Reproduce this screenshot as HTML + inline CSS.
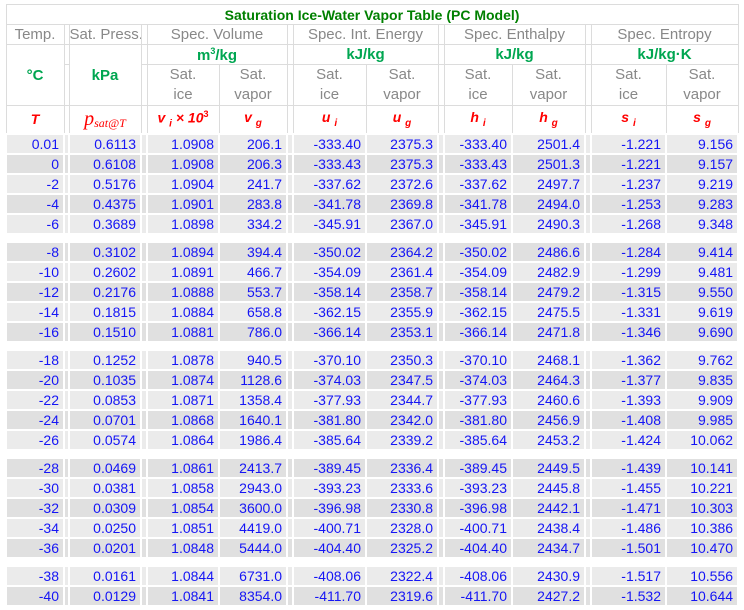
<!DOCTYPE html>
<html><head><meta charset="utf-8"><style>
body{margin:0;background:#fff;width:744px;height:610px;overflow:hidden;font-family:"Liberation Sans",Arial,sans-serif}
table{position:absolute;left:5px;top:4px;border-collapse:collapse;table-layout:fixed;width:734px}
td{padding:0;font-size:14px;overflow:hidden;white-space:nowrap}
.h td{border:1px solid #dcdcdc;text-align:center;background:#fff}
.t td{color:#008000;font-weight:bold;font-size:14px;height:19px}
.g td,td.g{color:#888;font-size:15px}
.u{color:#00a651;font-weight:bold;font-size:15px}
.s{color:#f00;font-weight:bold;font-style:italic}
.d td{height:18px;border:2px solid #fff;text-align:right;padding-right:4px;color:#1515f5;background:#ebebeb}
.d.b td{background:#e0e0e0}
.d td.x{padding:0}
.sep td{height:6px;background:#fff;border:1px solid #fff;border-top:0}
sub{font-size:10px;font-style:italic;vertical-align:-4px}
</style></head><body>
<table>
<colgroup><col style="width:58px"><col style="width:5px"><col style="width:72px"><col style="width:6px"><col style="width:72px"><col style="width:68px"><col style="width:6px"><col style="width:73px"><col style="width:72px"><col style="width:6px"><col style="width:68px"><col style="width:73px"><col style="width:6px"><col style="width:75px"><col style="width:72px"></colgroup>
<tr class="h t"><td colspan="15">Saturation Ice-Water Vapor Table (PC Model)</td></tr>
<tr class="h g" style="height:20px"><td>Temp.</td><td></td><td>Sat. Press.</td><td></td><td colspan="2">Spec. Volume</td><td></td><td colspan="2">Spec. Int. Energy</td><td></td><td colspan="2">Spec. Enthalpy</td><td></td><td colspan="2">Spec. Entropy</td></tr>
<tr class="h" style="height:20px"><td rowspan="2" class="u">°C</td><td></td><td rowspan="2" class="u">kPa</td><td></td><td colspan="2" class="u">m<sup style="font-size:9px">3</sup>/kg</td><td></td><td colspan="2" class="u">kJ/kg</td><td></td><td colspan="2" class="u">kJ/kg</td><td></td><td colspan="2" class="u">kJ/kg·K</td></tr>
<tr class="h g" style="height:40px;line-height:20px"><td></td><td></td><td>Sat.<br>ice</td><td>Sat.<br>vapor</td><td></td><td>Sat.<br>ice</td><td>Sat.<br>vapor</td><td></td><td>Sat.<br>ice</td><td>Sat.<br>vapor</td><td></td><td>Sat.<br>ice</td><td>Sat.<br>vapor</td></tr>
<tr class="h s" style="height:28px"><td>T</td><td></td><td style="font-family:'Liberation Serif',serif;font-weight:normal;font-size:20px">p<sub style="font-size:12px;vertical-align:-2px">sat@T</sub></td><td></td><td>v <sub>i</sub> × 10<sup style="font-size:9px;font-style:normal">3</sup></td><td>v <sub>g</sub></td><td></td><td>u <sub>i</sub></td><td>u <sub>g</sub></td><td></td><td>h <sub>i</sub></td><td>h <sub>g</sub></td><td></td><td>s <sub>i</sub></td><td>s <sub>g</sub></td></tr>
<tr class="d"><td>0.01</td><td class="x"></td><td>0.6113</td><td class="x"></td><td>1.0908</td><td>206.1</td><td class="x"></td><td>-333.40</td><td>2375.3</td><td class="x"></td><td>-333.40</td><td>2501.4</td><td class="x"></td><td>-1.221</td><td>9.156</td></tr>
<tr class="d b"><td>0</td><td class="x"></td><td>0.6108</td><td class="x"></td><td>1.0908</td><td>206.3</td><td class="x"></td><td>-333.43</td><td>2375.3</td><td class="x"></td><td>-333.43</td><td>2501.3</td><td class="x"></td><td>-1.221</td><td>9.157</td></tr>
<tr class="d"><td>-2</td><td class="x"></td><td>0.5176</td><td class="x"></td><td>1.0904</td><td>241.7</td><td class="x"></td><td>-337.62</td><td>2372.6</td><td class="x"></td><td>-337.62</td><td>2497.7</td><td class="x"></td><td>-1.237</td><td>9.219</td></tr>
<tr class="d b"><td>-4</td><td class="x"></td><td>0.4375</td><td class="x"></td><td>1.0901</td><td>283.8</td><td class="x"></td><td>-341.78</td><td>2369.8</td><td class="x"></td><td>-341.78</td><td>2494.0</td><td class="x"></td><td>-1.253</td><td>9.283</td></tr>
<tr class="d"><td>-6</td><td class="x"></td><td>0.3689</td><td class="x"></td><td>1.0898</td><td>334.2</td><td class="x"></td><td>-345.91</td><td>2367.0</td><td class="x"></td><td>-345.91</td><td>2490.3</td><td class="x"></td><td>-1.268</td><td>9.348</td></tr>
<tr class="sep"><td colspan="15"></td></tr>
<tr class="d b"><td>-8</td><td class="x"></td><td>0.3102</td><td class="x"></td><td>1.0894</td><td>394.4</td><td class="x"></td><td>-350.02</td><td>2364.2</td><td class="x"></td><td>-350.02</td><td>2486.6</td><td class="x"></td><td>-1.284</td><td>9.414</td></tr>
<tr class="d"><td>-10</td><td class="x"></td><td>0.2602</td><td class="x"></td><td>1.0891</td><td>466.7</td><td class="x"></td><td>-354.09</td><td>2361.4</td><td class="x"></td><td>-354.09</td><td>2482.9</td><td class="x"></td><td>-1.299</td><td>9.481</td></tr>
<tr class="d b"><td>-12</td><td class="x"></td><td>0.2176</td><td class="x"></td><td>1.0888</td><td>553.7</td><td class="x"></td><td>-358.14</td><td>2358.7</td><td class="x"></td><td>-358.14</td><td>2479.2</td><td class="x"></td><td>-1.315</td><td>9.550</td></tr>
<tr class="d"><td>-14</td><td class="x"></td><td>0.1815</td><td class="x"></td><td>1.0884</td><td>658.8</td><td class="x"></td><td>-362.15</td><td>2355.9</td><td class="x"></td><td>-362.15</td><td>2475.5</td><td class="x"></td><td>-1.331</td><td>9.619</td></tr>
<tr class="d b"><td>-16</td><td class="x"></td><td>0.1510</td><td class="x"></td><td>1.0881</td><td>786.0</td><td class="x"></td><td>-366.14</td><td>2353.1</td><td class="x"></td><td>-366.14</td><td>2471.8</td><td class="x"></td><td>-1.346</td><td>9.690</td></tr>
<tr class="sep"><td colspan="15"></td></tr>
<tr class="d"><td>-18</td><td class="x"></td><td>0.1252</td><td class="x"></td><td>1.0878</td><td>940.5</td><td class="x"></td><td>-370.10</td><td>2350.3</td><td class="x"></td><td>-370.10</td><td>2468.1</td><td class="x"></td><td>-1.362</td><td>9.762</td></tr>
<tr class="d b"><td>-20</td><td class="x"></td><td>0.1035</td><td class="x"></td><td>1.0874</td><td>1128.6</td><td class="x"></td><td>-374.03</td><td>2347.5</td><td class="x"></td><td>-374.03</td><td>2464.3</td><td class="x"></td><td>-1.377</td><td>9.835</td></tr>
<tr class="d"><td>-22</td><td class="x"></td><td>0.0853</td><td class="x"></td><td>1.0871</td><td>1358.4</td><td class="x"></td><td>-377.93</td><td>2344.7</td><td class="x"></td><td>-377.93</td><td>2460.6</td><td class="x"></td><td>-1.393</td><td>9.909</td></tr>
<tr class="d b"><td>-24</td><td class="x"></td><td>0.0701</td><td class="x"></td><td>1.0868</td><td>1640.1</td><td class="x"></td><td>-381.80</td><td>2342.0</td><td class="x"></td><td>-381.80</td><td>2456.9</td><td class="x"></td><td>-1.408</td><td>9.985</td></tr>
<tr class="d"><td>-26</td><td class="x"></td><td>0.0574</td><td class="x"></td><td>1.0864</td><td>1986.4</td><td class="x"></td><td>-385.64</td><td>2339.2</td><td class="x"></td><td>-385.64</td><td>2453.2</td><td class="x"></td><td>-1.424</td><td>10.062</td></tr>
<tr class="sep"><td colspan="15"></td></tr>
<tr class="d b"><td>-28</td><td class="x"></td><td>0.0469</td><td class="x"></td><td>1.0861</td><td>2413.7</td><td class="x"></td><td>-389.45</td><td>2336.4</td><td class="x"></td><td>-389.45</td><td>2449.5</td><td class="x"></td><td>-1.439</td><td>10.141</td></tr>
<tr class="d"><td>-30</td><td class="x"></td><td>0.0381</td><td class="x"></td><td>1.0858</td><td>2943.0</td><td class="x"></td><td>-393.23</td><td>2333.6</td><td class="x"></td><td>-393.23</td><td>2445.8</td><td class="x"></td><td>-1.455</td><td>10.221</td></tr>
<tr class="d b"><td>-32</td><td class="x"></td><td>0.0309</td><td class="x"></td><td>1.0854</td><td>3600.0</td><td class="x"></td><td>-396.98</td><td>2330.8</td><td class="x"></td><td>-396.98</td><td>2442.1</td><td class="x"></td><td>-1.471</td><td>10.303</td></tr>
<tr class="d"><td>-34</td><td class="x"></td><td>0.0250</td><td class="x"></td><td>1.0851</td><td>4419.0</td><td class="x"></td><td>-400.71</td><td>2328.0</td><td class="x"></td><td>-400.71</td><td>2438.4</td><td class="x"></td><td>-1.486</td><td>10.386</td></tr>
<tr class="d b"><td>-36</td><td class="x"></td><td>0.0201</td><td class="x"></td><td>1.0848</td><td>5444.0</td><td class="x"></td><td>-404.40</td><td>2325.2</td><td class="x"></td><td>-404.40</td><td>2434.7</td><td class="x"></td><td>-1.501</td><td>10.470</td></tr>
<tr class="sep"><td colspan="15"></td></tr>
<tr class="d"><td>-38</td><td class="x"></td><td>0.0161</td><td class="x"></td><td>1.0844</td><td>6731.0</td><td class="x"></td><td>-408.06</td><td>2322.4</td><td class="x"></td><td>-408.06</td><td>2430.9</td><td class="x"></td><td>-1.517</td><td>10.556</td></tr>
<tr class="d b"><td>-40</td><td class="x"></td><td>0.0129</td><td class="x"></td><td>1.0841</td><td>8354.0</td><td class="x"></td><td>-411.70</td><td>2319.6</td><td class="x"></td><td>-411.70</td><td>2427.2</td><td class="x"></td><td>-1.532</td><td>10.644</td></tr>
</table>
</body></html>
